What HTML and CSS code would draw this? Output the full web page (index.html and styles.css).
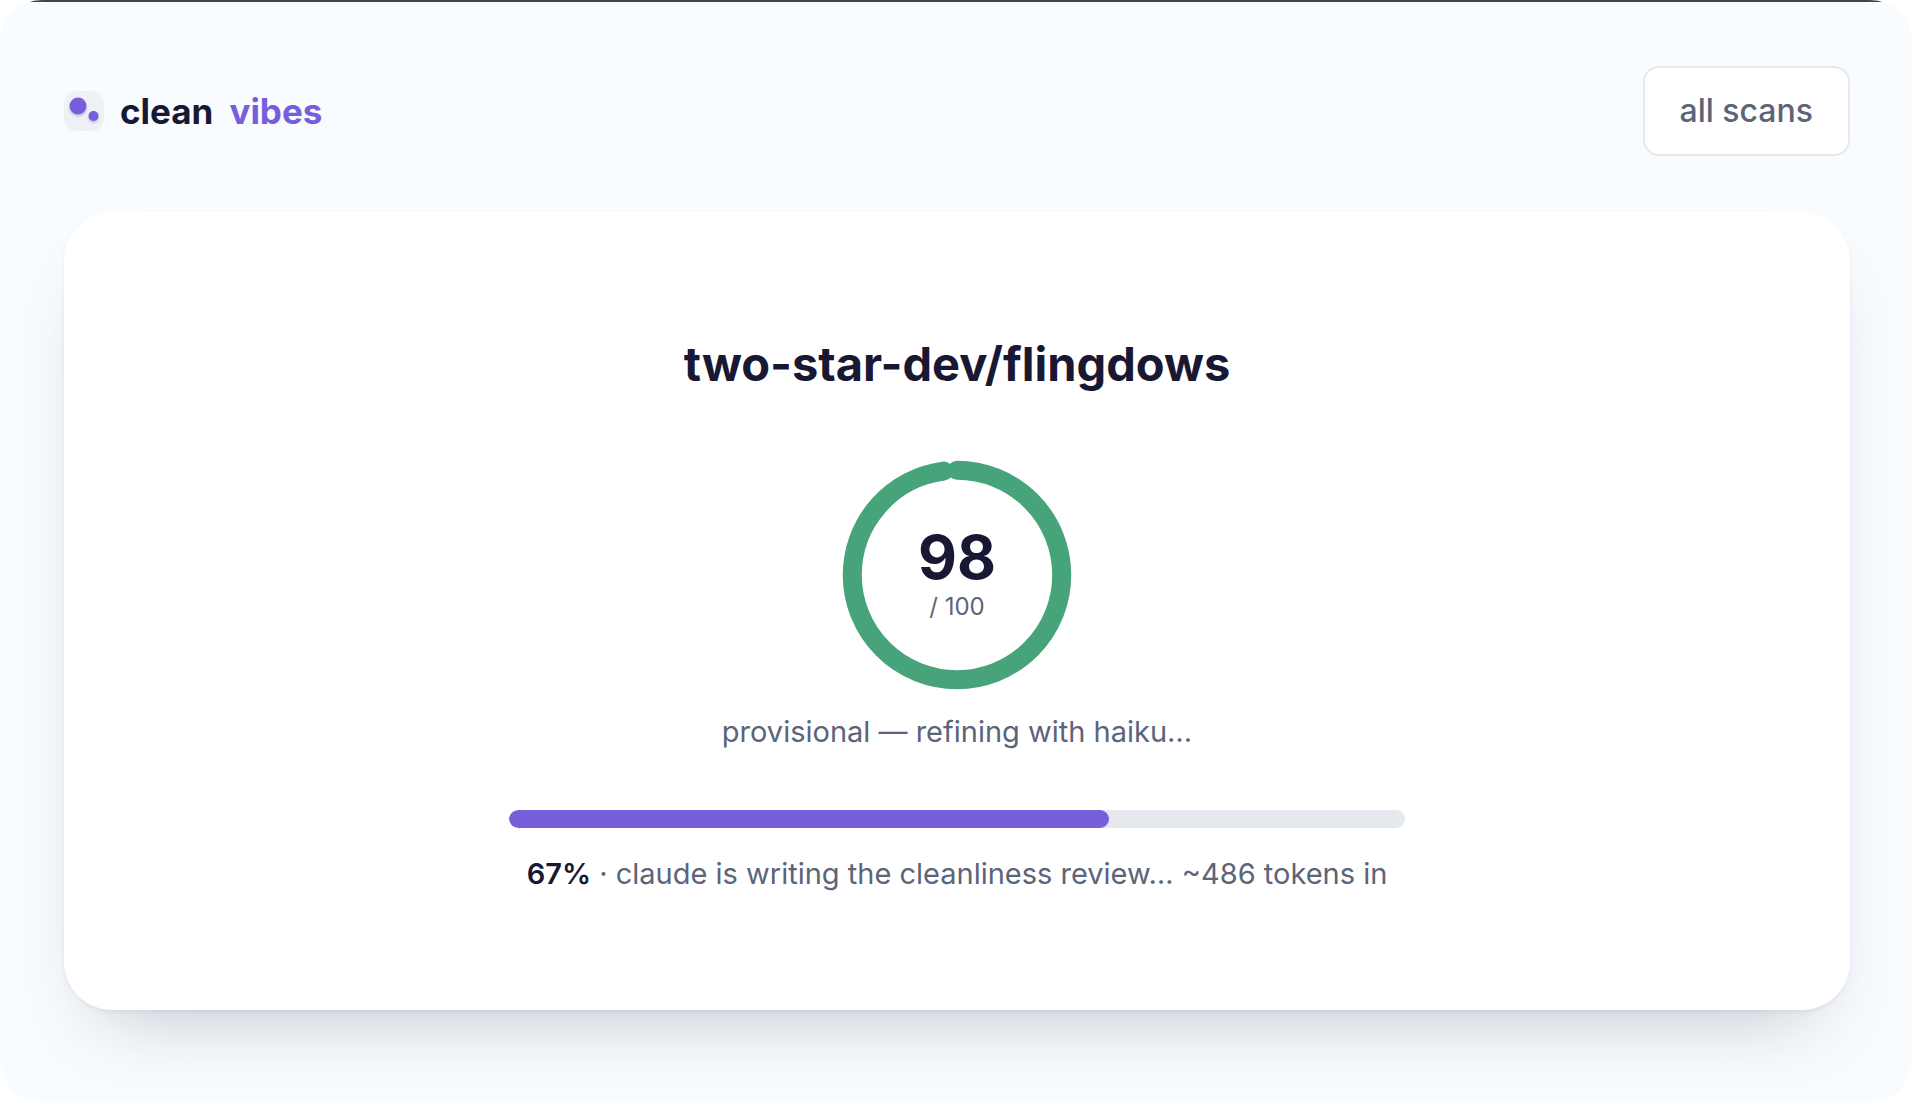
FILE: index.html
```html
<!DOCTYPE html>
<html lang="en">
  <head>
    <meta charset="UTF-8" />
    <meta name="viewport" content="width=device-width, initial-scale=1.0" />
    <title>clean vibes</title>
    <link rel="stylesheet" href="styles.css">
  </head>
  <body>
    <div class="page">
      <header class="topbar">
        <a href="/" class="brand">
          <svg class="brand-mark" viewBox="0 0 40 40" aria-hidden="true">
            <rect width="40" height="40" rx="12" fill="#eef1f6" />
            <circle cx="14" cy="15" r="8.5" />
            <circle cx="29.5" cy="25" r="5" />
          </svg>
          <span>clean</span>
          <span class="brand-accent">vibes</span>
        </a>
        <a href="/scans" class="nav-button">all scans</a>
      </header>

      <main class="card">
        <h1>two-star-dev/flingdows</h1>

        <div class="score">
          <svg class="score-ring" viewBox="0 0 100 100" aria-hidden="true">
            <circle cx="50" cy="50" r="44" pathLength="100" />
          </svg>
          <div class="score-text">
            <span class="score-value">98</span>
            <span class="score-max">/ 100</span>
          </div>
        </div>
        <p class="score-note">provisional — refining with haiku…</p>

        <progress id="scan-progress" class="progress" value="67" max="100"></progress>
        <label for="scan-progress" class="progress-label"><strong>67%</strong> · claude is writing the cleanliness review… ~486 tokens in</label>
      </main>
    </div>
  </body>
</html>
```
FILE: styles.css
```css
* {
  box-sizing: border-box;
}
body {
  margin: 0;
  background-color: #fff;
  color: #181833;
  font-family: Inter, sans-serif;
}
.page {
  min-height: 100vh;
  padding: 66px 62px 92px 64px;
  background: linear-gradient(#44444e 2px, #f8fcff 2px);
  border-radius: 42px;
  overflow: hidden;
}
.topbar {
  display: flex;
  align-items: center;
  justify-content: space-between;
  margin-bottom: 56px;
}
.brand {
  display: flex;
  align-items: center;
  gap: 16px;
  color: #181833;
  font-size: 35px;
  font-weight: 700;
  text-decoration: none;
}
.brand-mark {
  width: 40px;
  height: 40px;
}
.brand-mark circle {
  fill: #775edb;
  filter: drop-shadow(0 2px 1px rgba(24, 24, 51, 0.2));
}
.brand-accent {
  color: #775edb;
}
.nav-button {
  padding: 20px 35px;
  border: 2px solid #e5e8ed;
  border-radius: 16px;
  background-color: #fff;
  color: #5c6479;
  font-size: 32px;
  font-weight: 500;
  line-height: 46px;
  text-decoration: none;
}
.card {
  display: flex;
  flex-direction: column;
  align-items: center;
  padding: 120px 64px 114px;
  border-radius: 48px;
  background-color: #fff;
  box-shadow: 0 2px 4px rgba(24, 24, 51, 0.06),
    0 40px 80px -40px rgba(24, 24, 51, 0.28);
}
h1 {
  margin: 0 0 60px;
  font-size: 47px;
  font-weight: 700;
  line-height: 64px;
}
.score {
  display: grid;
  place-items: center;
  width: 238px;
  height: 238px;
}
.score-ring,
.score-text {
  grid-area: 1 / 1;
}
.score-ring {
  width: 100%;
  transform: rotate(-90deg);
}
.score-ring circle {
  fill: none;
  stroke: #47a37a;
  stroke-width: 8;
  stroke-linecap: round;
  stroke-dasharray: 98 100;
}
.score-text {
  display: flex;
  flex-direction: column;
  align-items: center;
  gap: 4px;
}
.score-value {
  font-size: 60px;
  font-weight: 700;
  line-height: 60px;
}
.score-max {
  color: #5c6479;
  font-size: 24px;
  line-height: 32px;
}
.score-note {
  margin: 16px 0 56px;
  color: #5c6479;
  font-size: 29px;
  line-height: 44px;
}
.progress {
  appearance: none;
  width: 100%;
  max-width: 896px;
  height: 18px;
  border: none;
  border-radius: 9px;
  background-color: #e5e8ed;
  overflow: hidden;
}
.progress::-webkit-progress-bar {
  background-color: #e5e8ed;
}
.progress::-webkit-progress-value {
  border-radius: 9px;
  background-color: #775edb;
}
.progress::-moz-progress-bar {
  border-radius: 9px;
  background-color: #775edb;
}
.progress-label {
  margin-top: 24px;
  color: #5c6479;
  font-size: 29px;
  line-height: 44px;
}
.progress-label strong {
  color: #181833;
  font-weight: 600;
}
```
